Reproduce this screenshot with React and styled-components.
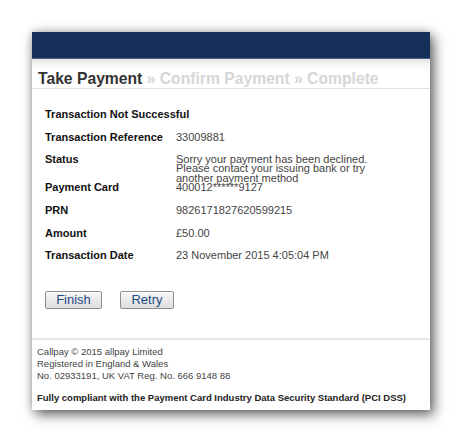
import React from "react";
import styled, { createGlobalStyle } from "styled-components";

const Global = createGlobalStyle`
  html, body { margin: 0; padding: 0; background: #fff; }
  body { font-family: "Liberation Sans", Arial, sans-serif; }
`;

const Page = styled.div`
  width: 462px;
  height: 442px;
  padding: 32px 32px 0 32px;
  box-sizing: border-box;
`;

const Panel = styled.div`
  width: 398px;
  height: 378px;
  background: #fff;
  box-shadow: 4px 5px 12px rgba(0, 0, 0, 0.55), 0 0 9px rgba(0, 0, 0, 0.25);
  display: flex;
  flex-direction: column;
`;

const Header = styled.div`
  height: 26px;
  background: #142f59;
  border-bottom: 1px solid #4b5f80;
`;

const Crumbs = styled.div`
  height: 30px;
  padding: 0 0 0 6px;
  display: flex;
  align-items: flex-end;
  background: linear-gradient(#e6e6e6 0px, #f8f8f8 7px, #fff 12px);
  border-bottom: 1px solid #e2e2e2;
  font-size: 15.7px;
  font-weight: bold;
  color: #d6d6d6;
  line-height: 18px;
  box-sizing: border-box;
  white-space: nowrap;
`;

const Current = styled.span`
  color: #333;
`;

const Body = styled.div`
  padding: 18px 0 0 13px;
  display: flex;
  flex-direction: column;
`;

const Title = styled.div`
  font-size: 11px;
  font-weight: bold;
  color: #111;
  height: 22.7px;
  line-height: 14px;
`;

const Row = styled.div`
  display: grid;
  grid-template-columns: 131px 1fr;
  height: ${(p) => p.$h || 22.7}px;
  font-size: 11px;
  line-height: 14px;
`;

const Label = styled.div`
  font-weight: bold;
  color: #111;
`;

const Value = styled.div`
  color: #444;
  line-height: ${(p) => (p.$tight ? "9.4px" : "14px")};
  padding-top: ${(p) => (p.$tight ? "2.5px" : "0")};
`;

const Buttons = styled.div`
  display: flex;
  gap: 18px;
  margin-top: 20px;
`;

const Button = styled.button`
  width: ${(p) => p.$w}px;
  height: 18px;
  padding: 0;
  font-family: "Liberation Sans", Arial, sans-serif;
  font-size: 13px;
  color: #1c4a86;
  border: 1px solid #8e8e8e;
  border-radius: 2px;
  background: linear-gradient(#f7f7f7, #dedede);
  box-shadow: inset 0 1px 0 #fff;
  line-height: 16px;
`;

const Footer = styled.div`
  margin-top: auto;
  border-top: 2px solid #e6e6e6;
  padding: 6px 0 6px 5px;
  font-size: 9.5px;
  color: #444;
`;

const FootLine = styled.div`
  line-height: 12px;
`;

const Compliance = styled.div`
  margin-top: 10px;
  font-weight: bold;
  color: #222;
  line-height: 12px;
`;

const rows = [
  ["Transaction Reference", "33009881"],
  ["Status", null],
  ["Payment Card", "400012******9127"],
  ["PRN", "9826171827620599215"],
  ["Amount", "£50.00"],
  ["Transaction Date", "23 November 2015 4:05:04 PM"],
];

export default function App() {
  return (
    <Page>
      <Global />
      <Panel>
        <Header />
        <Crumbs>
          <Current>Take Payment</Current>&nbsp;» Confirm Payment » Complete
        </Crumbs>
        <Body>
          <Title>Transaction Not Successful</Title>
          {rows.map(([l, v]) =>
            v === null ? (
              <Row key={l} $h={28}>
                <Label>{l}</Label>
                <Value $tight>
                  Sorry your payment has been declined.
                  <br />
                  Please contact your issuing bank or try
                  <br />
                  another payment method
                </Value>
              </Row>
            ) : (
              <Row key={l}>
                <Label>{l}</Label>
                <Value>{v}</Value>
              </Row>
            )
          )}
          <Buttons>
            <Button $w={57}>Finish</Button>
            <Button $w={54}>Retry</Button>
          </Buttons>
        </Body>
        <Footer>
          <FootLine>Callpay © 2015 allpay Limited</FootLine>
          <FootLine>Registered in England &amp; Wales</FootLine>
          <FootLine>No. 02933191, UK VAT Reg. No. 666 9148 88</FootLine>
          <Compliance>
            Fully compliant with the Payment Card Industry Data Security Standard (PCI DSS)
          </Compliance>
        </Footer>
      </Panel>
    </Page>
  );
}
